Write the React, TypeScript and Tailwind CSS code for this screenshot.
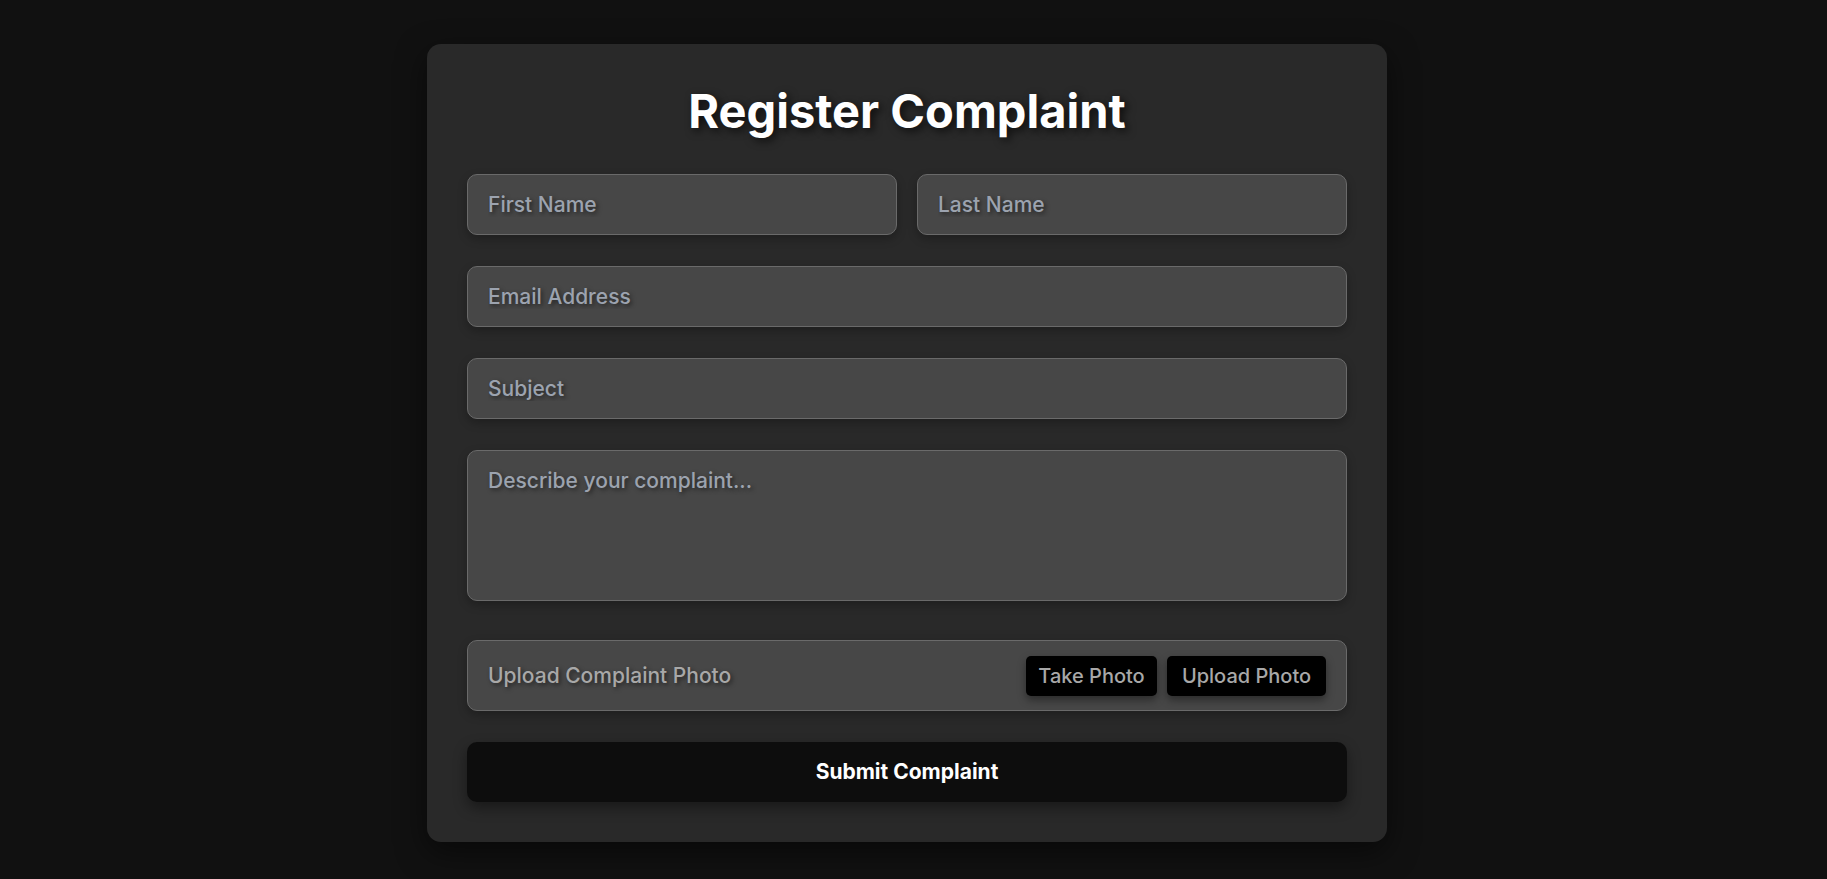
import React from "react";

const field =
  "w-full h-[61px] rounded-[10px] border border-[#6a6a6a] bg-[#474747] px-5 text-[21px] font-medium text-[#d1d5db] placeholder:text-[#9ca3af] outline-none shadow-[0_4px_10px_rgba(0,0,0,0.25)] [text-shadow:2px_2px_4px_rgba(0,0,0,0.5)]";

export default function App() {
  return (
    <div
      className="min-h-[879px] w-full bg-[#111111] flex justify-center pt-[44px] pr-[13px]"
      style={{ fontFamily: "Inter, 'Noto Sans', sans-serif" }}
    >
      <div className="w-[960px] h-[798px] rounded-[14px] bg-[#292929] px-10 pt-10 pb-10 shadow-[0_10px_30px_rgba(0,0,0,0.5)] flex flex-col">
        <h1 className="text-center text-[47px] leading-[54px] font-bold text-white [text-shadow:3px_3px_8px_rgba(0,0,0,0.7)]">
          Register Complaint
        </h1>
        <div className="mt-[36px] flex gap-5">
          <input className={field} placeholder="First Name" />
          <input className={field} placeholder="Last Name" />
        </div>
        <input className={field + " mt-[31px]"} placeholder="Email Address" />
        <input className={field + " mt-[31px]"} placeholder="Subject" />
        <textarea
          className={
            "mt-[31px] w-full h-[151px] resize-none rounded-[10px] border border-[#6a6a6a] bg-[#474747] px-5 pt-[14px] text-[21px] font-medium text-[#d1d5db] placeholder:text-[#9ca3af] outline-none shadow-[0_4px_10px_rgba(0,0,0,0.25)] [text-shadow:2px_2px_4px_rgba(0,0,0,0.5)]"
          }
          placeholder="Describe your complaint..."
        />
        <div className="mt-[39px] h-[71px] rounded-[10px] border border-[#6a6a6a] bg-[#474747] pl-5 pr-5 flex items-center justify-between shadow-[0_4px_10px_rgba(0,0,0,0.25)]">
          <span className="text-[21px] font-medium text-[#a8a8a8] [text-shadow:2px_2px_4px_rgba(0,0,0,0.5)]">
            Upload Complaint Photo
          </span>
          <div className="flex gap-[10px]">
            <button className="h-10 w-[131px] rounded-[5px] bg-black text-[20px] font-medium text-[#a8a8a8] shadow-[0_4px_8px_rgba(0,0,0,0.4)]">
              Take Photo
            </button>
            <button className="h-10 w-[159px] rounded-[5px] bg-black text-[20px] font-medium text-[#a8a8a8] shadow-[0_4px_8px_rgba(0,0,0,0.4)]">
              Upload Photo
            </button>
          </div>
        </div>
        <button className="mt-[31px] h-[60px] w-full rounded-[10px] bg-[#0d0d0d] text-[21px] font-bold text-white shadow-[0_6px_14px_rgba(0,0,0,0.4)]">
          Submit Complaint
        </button>
      </div>
    </div>
  );
}
